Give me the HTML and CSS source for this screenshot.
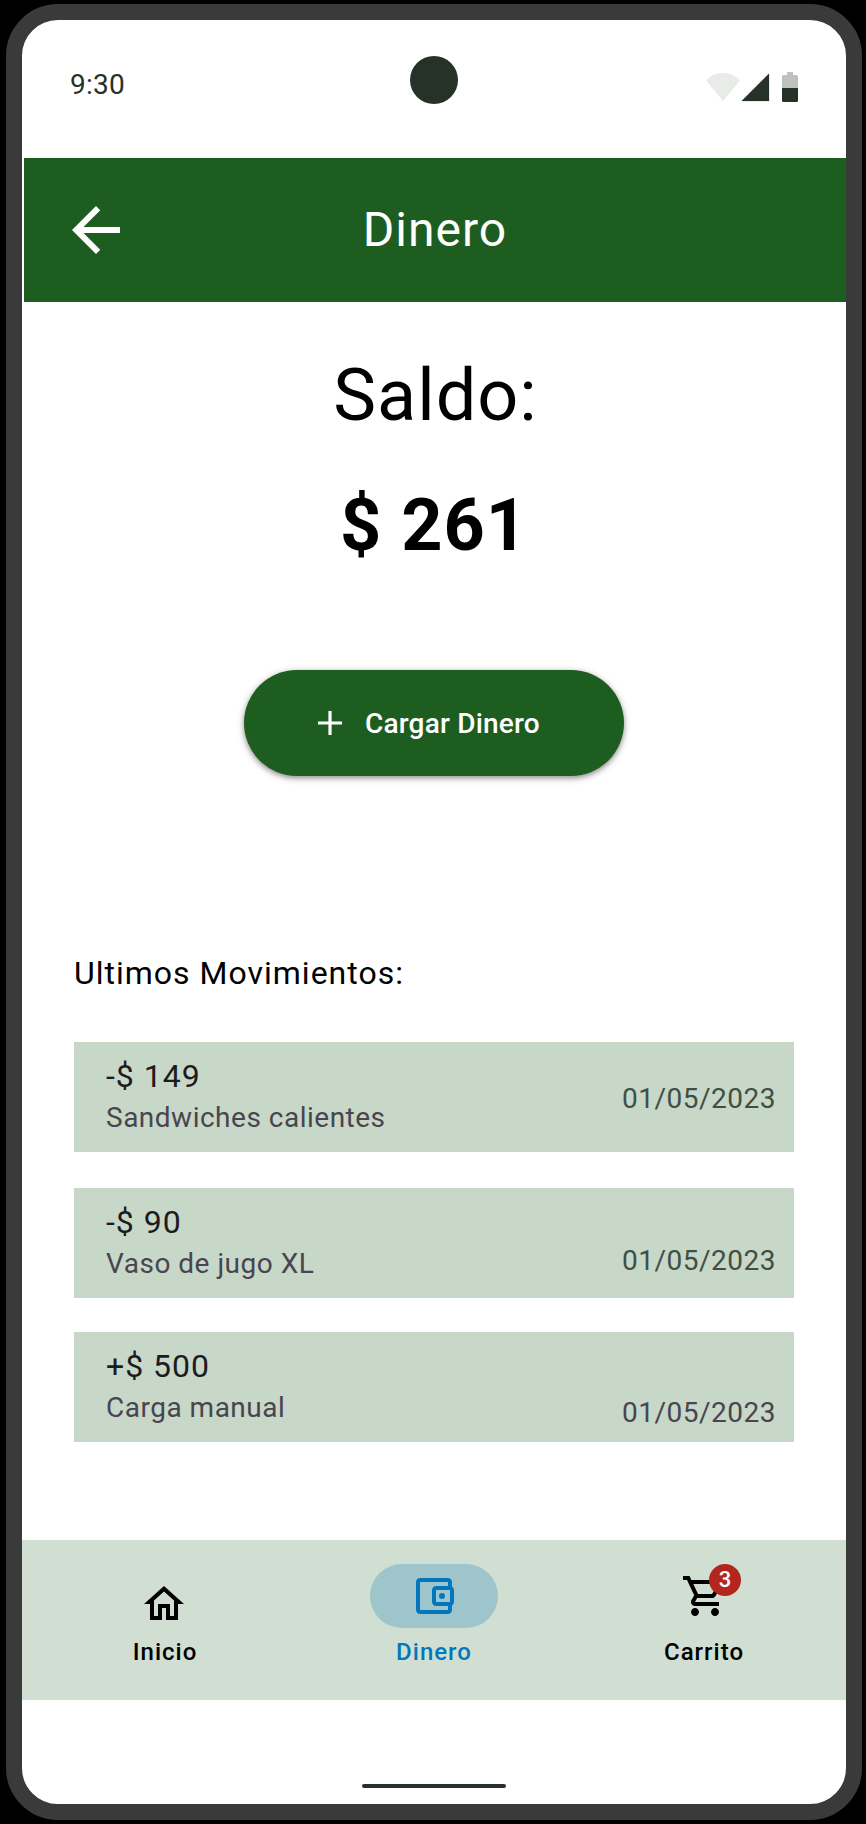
FILE: index.html
```html
<!DOCTYPE html>
<html lang="es">
<head>
<meta charset="utf-8">
<title>Dinero</title>
<link rel="stylesheet" href="styles.css">
</head>
<body>
<div class="device">
  <div class="status-bar">
    <span class="time">9:30</span>
    <span class="camera"></span>
    <svg class="status-icons" width="92" height="30" viewBox="0 0 92 30">
      <path fill="#e9ebe9" d="M0 8.4C4.5 3.5 10.500 1 17 1s12.500 2.500 17 7.400L17 29z"/>
      <path fill="#e9ebe9" d="M36 29.500 64 1.500V30H35z"/>
      <path fill="#263228" d="M35.500 29 63 1.500V29z"/>
      <path fill="#bdc2be" d="M81 0h6v3h3.500A1.500 1.500 0 0 1 92 4.500V16H76V4.500A1.500 1.500 0 0 1 77.500 3H81z"/>
      <path fill="#263228" d="M76 16h16v12.500a1.500 1.500 0 0 1-1.500 1.500h-13a1.500 1.500 0 0 1-1.500-1.500z"/>
    </svg>
  </div>

  <header class="app-bar">
    <svg class="back" width="72" height="72" viewBox="0 0 24 24"><path fill="#fff" d="M20 11H7.830l5.590-5.590L12 4l-8 8 8 8 1.410-1.410L7.830 13H20z"/></svg>
    <h1 class="title">Dinero</h1>
  </header>

  <main class="content">
    <section class="balance">
      <p class="balance-label">Saldo:</p>
      <p class="balance-value">$ 261</p>
      <button class="load-button">
        <svg width="24" height="24" viewBox="0 0 24 24"><path fill="#fff" d="M10.400 0h3.200v10.400H24v3.200H13.600V24h-3.200V13.600H0v-3.200h10.400z"/></svg>
        <span class="load-label">Cargar Dinero</span>
      </button>
    </section>

    <h2 class="list-title">Ultimos Movimientos:</h2>
    <ul class="movements">
      <li class="movement">
        <div class="detail"><span class="amount">-$ 149</span><span class="concept">Sandwiches calientes</span></div>
        <time class="date">01/05/2023</time>
      </li>
      <li class="movement low">
        <div class="detail"><span class="amount">-$ 90</span><span class="concept">Vaso de jugo XL</span></div>
        <time class="date">01/05/2023</time>
      </li>
      <li class="movement lowest">
        <div class="detail"><span class="amount">+$ 500</span><span class="concept">Carga manual</span></div>
        <time class="date">01/05/2023</time>
      </li>
    </ul>
  </main>

  <nav class="nav-bar">
    <a class="nav-item">
      <span class="nav-icon home"><svg width="48" height="48" viewBox="0 0 24 24"><path d="M12 5.690l5 4.500V18h-2v-6H9v6H7v-7.810l5-4.500M12 3L2 12h3v8h6v-6h2v6h6v-8h3L12 3z"/></svg></span>
      <span class="nav-label home-label">Inicio</span>
    </a>
    <a class="nav-item active">
      <span class="nav-icon"><svg width="48" height="48" viewBox="0 0 24 24"><path d="M21 7.280V5c0-1.100-.9-2-2-2H5c-1.110 0-2 .9-2 2v14c0 1.100.890 2 2 2h14c1.100 0 2-.9 2-2v-2.280A2 2 0 0 0 22 15V9a2 2 0 0 0-1-1.720zM20 9v6h-7V9h7zM5 19V5h14v2h-6c-1.100 0-2 .9-2 2v6c0 1.100.9 2 2 2h6v2H5z"/><circle cx="16" cy="12" r="1.500"/></svg></span>
      <span class="nav-label">Dinero</span>
    </a>
    <a class="nav-item">
      <span class="nav-icon cart"><svg width="48" height="48" viewBox="0 0 24 24"><path d="M15.550 13c.750 0 1.410-.410 1.750-1.030l3.580-6.490A.996.996 0 0 0 20.010 4H5.210l-.940-2H1v2h2l3.600 7.590-1.350 2.440C4.520 15.370 5.480 17 7 17h12v-2H7l1.100-2h7.450zM6.160 6h12.150l-2.760 5H8.530L6.160 6zM7 18c-1.100 0-1.990.9-1.990 2S5.900 22 7 22s2-.9 2-2-.9-2-2-2zm10 0c-1.100 0-1.990.9-1.990 2s.890 2 1.990 2 2-.9 2-2-.9-2-2-2z"/></svg><span class="badge">3</span></span>
      <span class="nav-label">Carrito</span>
    </a>
  </nav>
  <div class="gesture-area"><span class="gesture-handle"></span></div>
</div>
</body>
</html>
```
FILE: styles.css
```css
* { box-sizing: border-box; margin: 0; padding: 0; }

body {
  width: 866px;
  height: 1824px;
  padding: 4px 4px 4px 6px;
  background: #000;
  font-family: Roboto, "Liberation Sans", sans-serif;
  overflow: hidden;
}

svg { display: block; flex: none; }

.device {
  display: flex;
  flex-direction: column;
  width: 856px;
  height: 1816px;
  border: 16px solid #3a3a3a;
  border-radius: 52px;
  background: #fff;
  overflow: hidden;
}

.status-bar {
  display: grid;
  grid-template-columns: 1fr 48px 1fr;
  height: 138px;
  padding: 36px 48px 0;
}
.time {
  font-size: 28px;
  line-height: 40px;
  height: 40px;
  margin-top: 9px;
  letter-spacing: 0.28px;
  color: #263228;
}
.camera { width: 48px; height: 48px; border-radius: 50%; background: #263228; }
.status-icons { justify-self: end; margin-top: 16px; }

.app-bar {
  display: grid;
  grid-template-columns: 72px 1fr 72px;
  align-items: center;
  height: 144px;
  margin-left: 2px;
  padding: 0 36px;
  background: #1d5e20;
}
.title {
  font-size: 48px;
  font-weight: 400;
  line-height: 64px;
  letter-spacing: 1px;
  text-align: center;
  color: #fff;
}

.content { flex: 1; padding: 0 52px; }
.balance { display: flex; flex-direction: column; align-items: center; }
.balance-label, .balance-value {
  font-size: 72px;
  line-height: 96px;
  letter-spacing: 1px;
  color: #000;
}
.balance-label { margin-top: 46px; padding-left: 3px; }
.balance-value { margin-top: 34px; font-weight: 700; }
.load-button {
  display: flex;
  align-items: center;
  gap: 23px;
  width: 380px;
  height: 106px;
  margin-top: 96px;
  padding-left: 74px;
  border: 0;
  border-radius: 53px;
  background: #1d5e20;
  box-shadow: 0 2px 4px rgba(0, 0, 0, .3), 0 2px 6px 2px rgba(0, 0, 0, .15);
  color: #fff;
  font: 500 28px/40px Roboto, "Liberation Sans", sans-serif;
  letter-spacing: 0.2px;
}
.load-label { padding-top: 2px; }
.list-title {
  margin-top: 173px;
  font-size: 32px;
  font-weight: 400;
  line-height: 48px;
  letter-spacing: 1px;
}

.movements { list-style: none; margin-top: 45px; }
.movement {
  display: flex;
  justify-content: space-between;
  height: 110px;
  padding: 10px 18px 0 32px;
  background: #c7d7c8;
}
.movement + .movement { margin-top: 36px; }
.movement + .lowest { margin-top: 34px; }
.detail { display: flex; flex-direction: column; }
.amount { font-size: 32px; line-height: 48px; letter-spacing: 1px; color: #1d1b20; }
.concept { font-size: 28px; line-height: 40px; margin-top: -2px; letter-spacing: 0.5px; color: #49454f; }
.date { margin-top: 27px; font-size: 28px; line-height: 40px; letter-spacing: 0.5px; color: #404f45; }
.low .date { margin-top: 43px; }
.lowest .date { margin-top: 51px; color: #49454f; }

.nav-bar {
  display: flex;
  gap: 16px;
  height: 160px;
  padding: 24px 15px 0;
  background: #d1dfd2;
}
.nav-item { flex: 1; display: flex; flex-direction: column; align-items: center; gap: 8px; color: #000; fill: #000; }
.nav-icon {
  position: relative;
  display: flex;
  align-items: center;
  justify-content: center;
  width: 128px;
  height: 64px;
  border-radius: 32px;
}
.home { padding-top: 16px; }
.cart { margin-left: 2px; }
.active { color: #0277bd; fill: #0277bd; }
.active .nav-icon { background: #9ec5cb; }
.nav-label { font-size: 24px; font-weight: 500; line-height: 32px; letter-spacing: 1px; }
.home-label { padding-left: 2px; }
.badge {
  position: absolute;
  top: 0;
  left: 68px;
  width: 32px;
  height: 32px;
  border-radius: 50%;
  background: #b3261e;
  color: #fff;
  font-size: 22px;
  font-weight: 500;
  line-height: 32px;
  text-align: center;
}

.gesture-area { display: flex; justify-content: center; align-items: flex-end; height: 104px; padding-bottom: 16px; }
.gesture-handle { width: 144px; height: 4px; border-radius: 2px; background: #263228; }
```
